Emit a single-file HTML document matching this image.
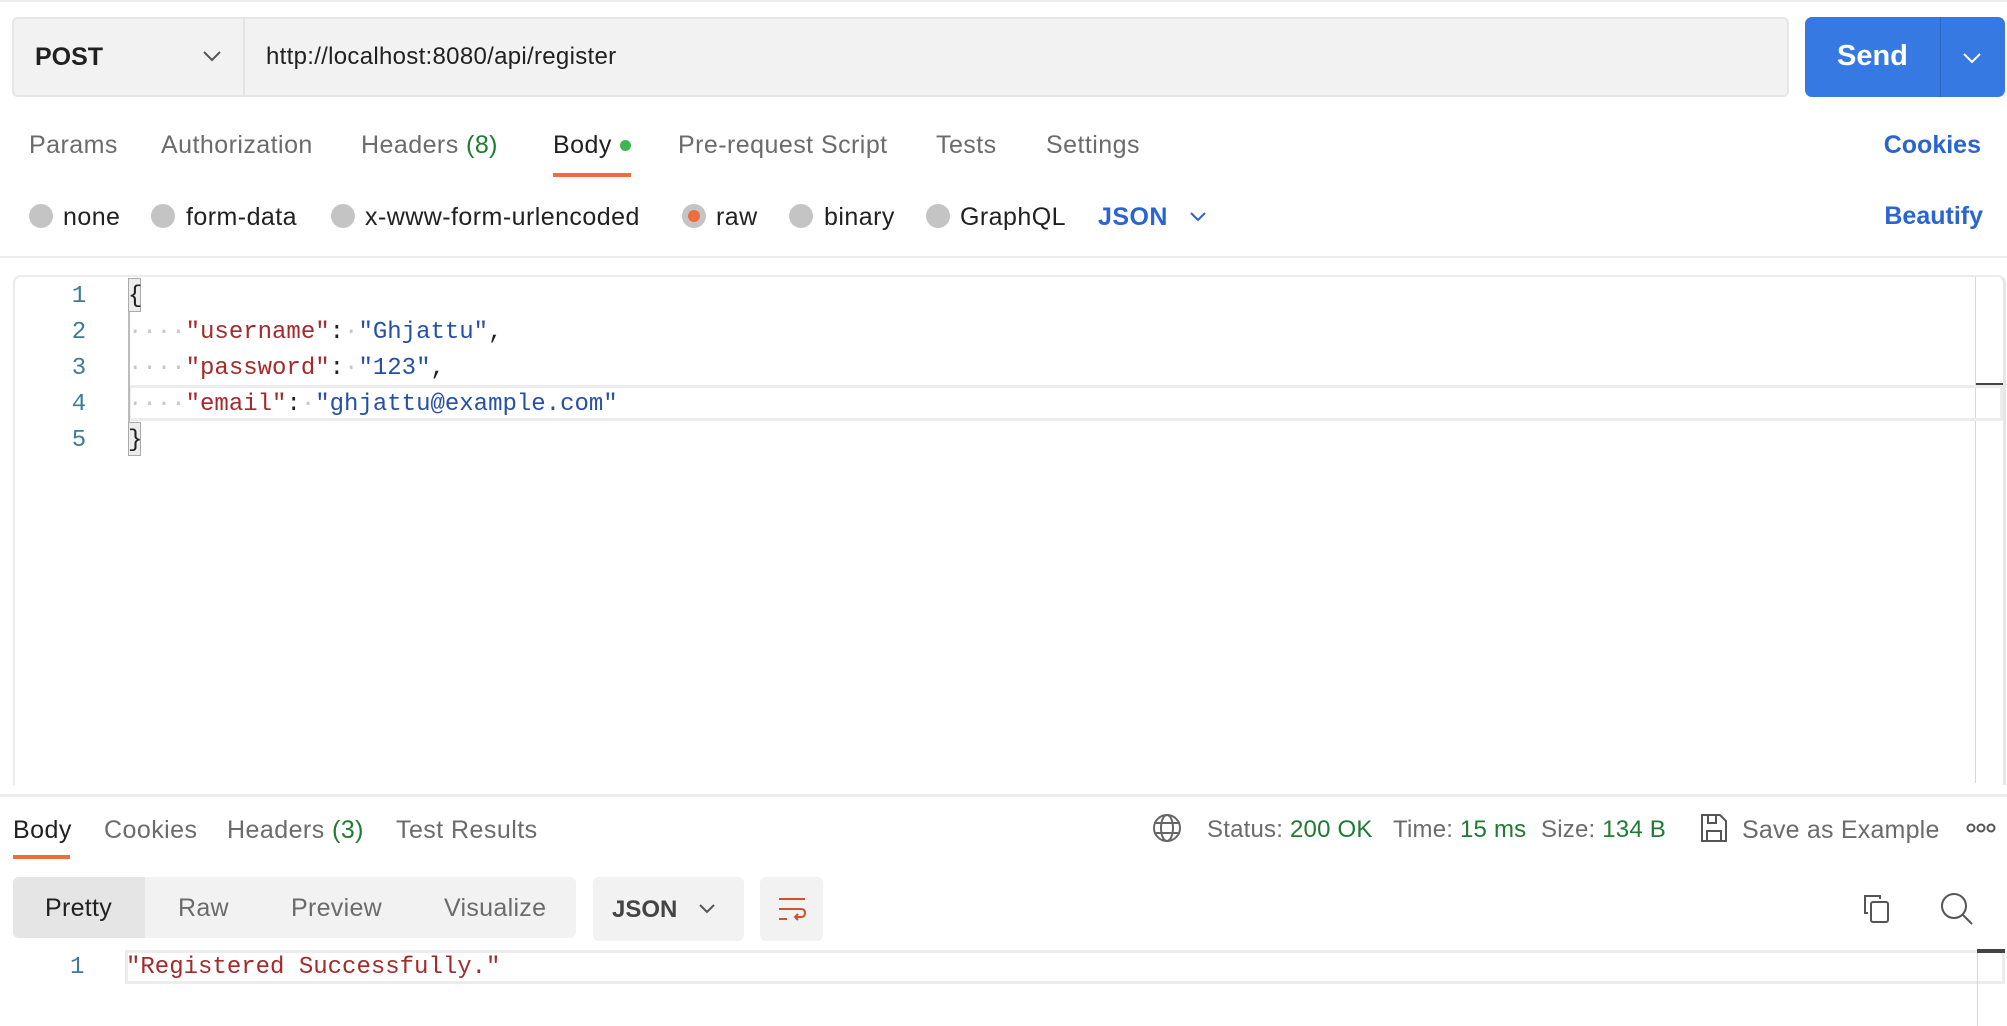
<!DOCTYPE html>
<html><head><meta charset="utf-8"><style>
*{box-sizing:border-box;margin:0;padding:0}
body{width:2007px;height:1026px;background:#fff;position:relative;overflow:hidden;font-family:"Liberation Sans",sans-serif;color:#212121}
.a{position:absolute;white-space:nowrap}
.t{font-size:25px;letter-spacing:0.45px;color:#6b6b6b;top:131px}
.g{color:#1f7a32}
.rc{position:absolute;width:24px;height:24px;border-radius:50%;background:#c4c4c4;top:204px}
.rl{position:absolute;top:203px;font-size:25px;letter-spacing:0.45px;color:#212121}
.mono{font-family:"Liberation Mono",monospace;font-size:24px}
.ln{position:absolute;left:64px;width:30px;text-align:center;color:#3d7a9c;font-family:"Liberation Mono",monospace;font-size:24px}
.k{color:#a32a2a}.s{color:#2550a8}.d{color:#c8c8c8}
.rt{font-size:25px;letter-spacing:0.45px;top:816px}
</style></head><body>
<div class="a" style="left:0;top:0;width:2007px;height:2px;background:#ececec"></div>
<!-- url bar -->
<div class="a" style="left:12px;top:17px;width:1777px;height:80px;background:#f2f2f2;border:2px solid #e6e6e6;border-radius:6px"></div>
<div class="a" style="left:243px;top:19px;width:2px;height:76px;background:#e3e3e3"></div>
<div class="a" style="left:35px;top:43px;font-size:25px;font-weight:bold;color:#212121">POST</div>
<svg class="a" style="left:202px;top:50px" width="20" height="12"><path d="M2 2 L10 10 L18 2" stroke="#555" stroke-width="2" fill="none"/></svg>
<div class="a" style="left:266px;top:43px;font-size:24px;letter-spacing:0.3px;color:#212121">http://localhost:8080/api/register</div>
<div class="a" style="left:1805px;top:17px;width:200px;height:80px;background:#3679e3;border-radius:7px"></div>
<div class="a" style="left:1940px;top:17px;width:1px;height:80px;background:#2c66c4"></div>
<div class="a" style="left:1837px;top:40px;font-size:29px;font-weight:bold;color:#fff">Send</div>
<svg class="a" style="left:1962px;top:52px" width="20" height="12"><path d="M2 2 L10 10 L18 2" stroke="#fff" stroke-width="2" fill="none"/></svg>
<!-- tabs -->
<div class="a t" style="left:29px">Params</div>
<div class="a t" style="left:161px">Authorization</div>
<div class="a t" style="left:361px">Headers <span class="g">(8)</span></div>
<div class="a t" style="left:553px;color:#212121">Body</div>
<div class="a" style="left:620px;top:140px;width:11px;height:11px;border-radius:50%;background:#3fb551"></div>
<div class="a" style="left:553px;top:173px;width:78px;height:4px;background:#ef6c3d"></div>
<div class="a t" style="left:678px">Pre-request Script</div>
<div class="a t" style="left:936px">Tests</div>
<div class="a t" style="left:1046px">Settings</div>
<div class="a" style="right:26px;top:131px;font-size:25px;font-weight:bold;color:#2a64cf">Cookies</div>
<!-- radios -->
<div class="rc" style="left:29px"></div><div class="rl" style="left:63px">none</div>
<div class="rc" style="left:151px"></div><div class="rl" style="left:186px">form-data</div>
<div class="rc" style="left:331px"></div><div class="rl" style="left:365px">x-www-form-urlencoded</div>
<div class="rc" style="left:682px;background:#c4c4c4"><div style="position:absolute;left:6px;top:6px;width:12px;height:12px;border-radius:50%;background:#ef6c3d"></div></div><div class="rl" style="left:716px">raw</div>
<div class="rc" style="left:789px"></div><div class="rl" style="left:824px">binary</div>
<div class="rc" style="left:926px"></div><div class="rl" style="left:960px">GraphQL</div>
<div class="rl" style="left:1098px;color:#2a64cf;font-weight:bold">JSON</div>
<svg class="a" style="left:1189px;top:211px" width="18" height="11"><path d="M2 2 L9 9 L16 2" stroke="#2a64cf" stroke-width="2" fill="none"/></svg>
<div class="a" style="right:24px;top:202px;font-size:25px;font-weight:bold;color:#2a64cf">Beautify</div>
<div class="a" style="left:0;top:256px;width:2007px;height:2px;background:#ececec"></div>
<!-- editor -->
<div class="a" style="left:13px;top:275px;width:1993px;height:510px;border:2px solid #ebebeb;border-right:3px solid #e6e6e6;border-bottom:none;border-radius:8px 8px 0 0"></div>
<div class="a" style="left:1975px;top:277px;width:1px;height:506px;background:#d6d6d6"></div>
<div class="a" style="left:1976px;top:383px;width:27px;height:4px;background:#444"></div>
<div class="a" style="left:128px;top:385px;width:1875px;height:36px;border:3px solid #ececec"></div>
<div class="a" style="left:128px;top:296px;width:2px;height:143px;background:#bcbcbc"></div>
<div class="a" style="left:128px;top:278px;width:13px;height:34px;background:#ececec;border:1px solid #aaa"></div>
<div class="a" style="left:128px;top:422px;width:13px;height:34px;background:#ececec;border:1px solid #aaa"></div>
<div class="ln" style="top:283px">1</div>
<div class="ln" style="top:319px">2</div>
<div class="ln" style="top:355px">3</div>
<div class="ln" style="top:391px">4</div>
<div class="ln" style="top:427px">5</div>
<div class="a mono" style="left:128px;top:283px">{</div>
<div class="a mono" style="left:128px;top:319px"><span class="d">····</span><span class="k">"username"</span>:<span class="d">·</span><span class="s">"Ghjattu"</span>,</div>
<div class="a mono" style="left:128px;top:355px"><span class="d">····</span><span class="k">"password"</span>:<span class="d">·</span><span class="s">"123"</span>,</div>
<div class="a mono" style="left:128px;top:391px"><span class="d">····</span><span class="k">"email"</span>:<span class="d">·</span><span class="s">"ghjattu@example.com"</span></div>
<div class="a mono" style="left:128px;top:427px">}</div>
<div class="a" style="left:0;top:794px;width:2007px;height:3px;background:#ececec"></div>
<!-- response tabs -->
<div class="a rt" style="left:13px;color:#212121">Body</div>
<div class="a" style="left:13px;top:855px;width:57px;height:4px;background:#ef6c3d"></div>
<div class="a rt" style="left:104px;color:#6b6b6b">Cookies</div>
<div class="a rt" style="left:227px;color:#6b6b6b">Headers <span class="g">(3)</span></div>
<div class="a rt" style="left:396px;color:#6b6b6b">Test Results</div>
<svg class="a" style="left:1152px;top:813px" width="30" height="30" fill="none" stroke="#666" stroke-width="2"><circle cx="15" cy="15" r="13"/><ellipse cx="15" cy="15" rx="6" ry="13"/><path d="M3 10 H27 M3 20 H27"/></svg>
<div class="a" style="left:1207px;top:816px;font-size:24px;letter-spacing:0.2px;color:#6b6b6b">Status: <span class="g">200 OK</span></div>
<div class="a" style="left:1393px;top:816px;font-size:24px;letter-spacing:0.2px;color:#6b6b6b">Time: <span class="g">15 ms</span></div>
<div class="a" style="left:1541px;top:816px;font-size:24px;letter-spacing:0.2px;color:#6b6b6b">Size: <span class="g">134 B</span></div>
<svg class="a" style="left:1700px;top:813px" width="28" height="30" fill="none" stroke="#555" stroke-width="2"><path d="M2 2 H20 L26 8 V28 H2 Z"/><path d="M8 2 V10 H16 V2"/><path d="M7 28 V18 H21 V28"/></svg>
<div class="a" style="left:1742px;top:816px;font-size:25px;letter-spacing:0.2px;color:#6b6b6b">Save as Example</div>
<svg class="a" style="left:1966px;top:823px" width="30" height="10" fill="none" stroke="#555" stroke-width="2"><circle cx="5" cy="5" r="3.5"/><circle cx="15" cy="5" r="3.5"/><circle cx="25" cy="5" r="3.5"/></svg>
<!-- segmented -->
<div class="a" style="left:13px;top:877px;width:563px;height:61px;background:#f2f2f2;border-radius:6px;overflow:hidden"><div style="width:132px;height:61px;background:#e5e5e5"></div></div>
<div class="a" style="left:45px;top:894px;font-size:25px;letter-spacing:0.3px;color:#212121">Pretty</div>
<div class="a" style="left:178px;top:894px;font-size:25px;letter-spacing:0.3px;color:#6b6b6b">Raw</div>
<div class="a" style="left:291px;top:894px;font-size:25px;letter-spacing:0.3px;color:#6b6b6b">Preview</div>
<div class="a" style="left:444px;top:894px;font-size:25px;letter-spacing:0.3px;color:#6b6b6b">Visualize</div>
<div class="a" style="left:593px;top:877px;width:151px;height:64px;background:#f2f2f2;border-radius:6px"></div>
<div class="a" style="left:612px;top:896px;font-size:24px;font-weight:bold;color:#444">JSON</div>
<svg class="a" style="left:698px;top:903px" width="18" height="11"><path d="M2 2 L9 9 L16 2" stroke="#555" stroke-width="2" fill="none"/></svg>
<div class="a" style="left:760px;top:877px;width:63px;height:64px;background:#f2f2f2;border-radius:6px"></div>
<svg class="a" style="left:777px;top:895px" width="30" height="30" fill="none" stroke="#d0522a" stroke-width="2"><path d="M2 4 H28 M2 14 H24 Q28 14 28 18 Q28 22 24 22 H18 M21 19 L18 22 L21 25 M2 24 H10"/></svg>
<svg class="a" style="left:1862px;top:893px" width="30" height="32" fill="none" stroke="#555" stroke-width="2"><path d="M6 20 H3 V3 H18 V6"/><rect x="9" y="9" width="17" height="20" rx="2"/></svg>
<svg class="a" style="left:1940px;top:892px" width="34" height="34" fill="none" stroke="#555" stroke-width="2"><circle cx="14" cy="14" r="12"/><path d="M23 23 L32 32"/></svg>
<!-- response editor -->
<div class="a" style="left:125px;top:950px;width:1880px;height:34px;border:3px solid #ececec"></div>
<div class="a" style="left:1977px;top:950px;width:1px;height:76px;background:#d6d6d6"></div>
<div class="a" style="left:1977px;top:949px;width:28px;height:4px;background:#444"></div>
<div class="a" style="left:70px;top:954px;font-family:'Liberation Mono',monospace;font-size:24px;color:#3d7a9c">1</div>
<div class="a mono k" style="left:126px;top:954px">"Registered Successfully."</div>
</body></html>
